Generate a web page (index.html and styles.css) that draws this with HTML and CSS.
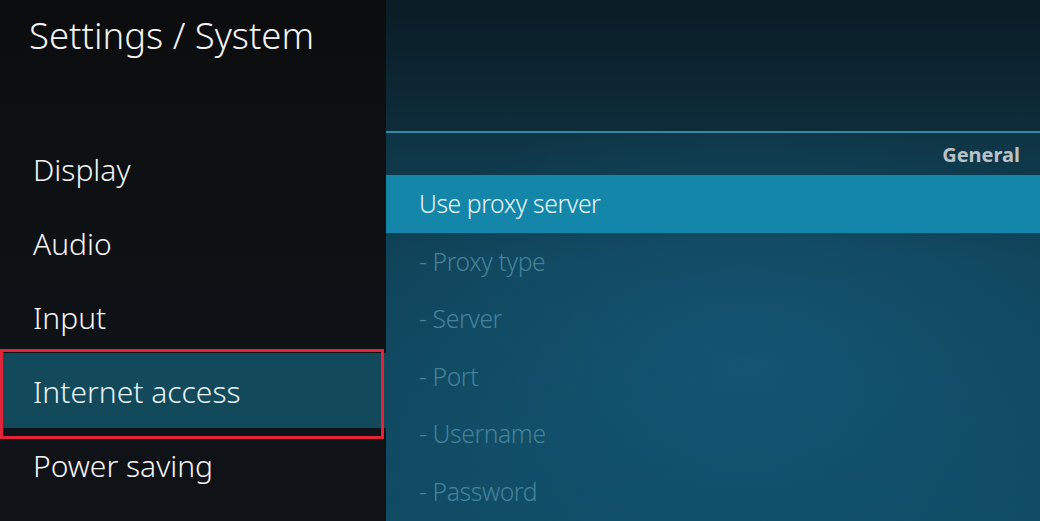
FILE: index.html
```html
<!DOCTYPE html>
<html>
<head>
<meta charset="utf-8">
<link rel="stylesheet" href="styles.css">
</head>
<body>
<div class="app">
  <aside class="side">
    <h1 class="title">Settings / System</h1>
    <ul class="menu">
      <li class="menu-item">Display</li>
      <li class="menu-item">Audio</li>
      <li class="menu-item">Input</li>
      <li class="menu-item selected">Internet access</li>
      <li class="menu-item">Power saving</li>
    </ul>
  </aside>
  <main class="content">
    <div class="header"></div>
    <div class="group">General</div>
    <ul class="list">
      <li class="row focused">Use proxy server</li>
      <li class="row sub">- Proxy type</li>
      <li class="row sub">- Server</li>
      <li class="row sub">- Port</li>
      <li class="row sub">- Username</li>
      <li class="row sub">- Password</li>
    </ul>
  </main>
</div>
</body>
</html>
```
FILE: styles.css
```css
html, body {
  margin: 0;
  padding: 0;
  width: 1040px;
  height: 521px;
  overflow: hidden;
  font-family: "Noto Sans", "Open Sans", sans-serif;
}
.app {
  display: flex;
  width: 1040px;
  height: 521px;
}
.side {
  width: 386px;
  flex: none;
  background: linear-gradient(180deg, #0b0c0d 0%, #0e1114 40%, #0f1317 100%);
  color: #ffffff;
}
.title {
  margin: 0;
  padding: 9px 0 0 29px;
  height: 133px;
  box-sizing: border-box;
  font-weight: 300;
  font-size: 36.5px;
  line-height: 52px;
  color: #f2f2f2;
}
.menu {
  list-style: none;
  margin: 0;
  padding: 0;
}
.menu-item {
  height: 74px;
  line-height: 74px;
  padding-left: 33px;
  font-size: 30px;
  font-weight: 300;
  color: #f4f4f4;
}
.menu-item.selected {
  position: relative;
  height: 75px;
  margin-top: -2px;
  margin-bottom: 1px;
  line-height: 77px;
  background: #124a5c;
  color: #e6f2f4;
}
.menu-item.selected::after {
  content: "";
  position: absolute;
  left: 0;
  right: 2px;
  top: -4px;
  bottom: -11px;
  border: 3px solid #e0243a;
}
.content {
  flex: 1;
  display: flex;
  flex-direction: column;
  background:
    radial-gradient(ellipse 420px 260px at 55% 70%, rgba(22, 95, 128, 0.6), rgba(22, 95, 128, 0) 100%),
    linear-gradient(180deg, #0a1f29 0%, #0e3444 25%, #0f4359 50%, #0f4b64 100%);
}
.header {
  height: 131px;
  flex: none;
  border-bottom: 2px solid #2e8aa6;
  background: linear-gradient(180deg, #0a1c25 0%, #0d2c3a 100%);
}
.group {
  height: 42px;
  line-height: 44px;
  text-align: right;
  padding-right: 20px;
  font-size: 20px;
  font-weight: 700;
  color: #b9c2c6;
}
.list {
  list-style: none;
  margin: 0;
  padding: 0;
}
.row {
  height: 57.5px;
  line-height: 57px;
  padding-left: 33px;
  font-size: 24.7px;
  font-weight: 300;
  letter-spacing: -0.4px;
}
.row.focused {
  background: #1386aa;
  color: #e8f6fa;
}
.row.sub {
  color: #44829a;
}
```
